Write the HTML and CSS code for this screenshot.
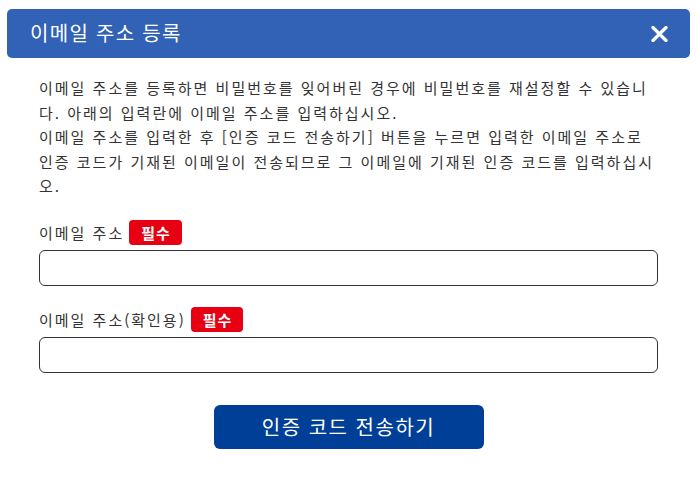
FILE: index.html
```html
<!DOCTYPE html>
<html lang="ko">
<head>
<meta charset="utf-8">
<link rel="stylesheet" href="styles.css">
</head>
<body>
<div class="dialog">
  <div class="header">
    <h1 class="title">이메일 주소 등록</h1>
    <button class="close" aria-label="닫기">
      <svg width="17" height="16" viewBox="0 0 17 16"><path d="M2 1.5L15 14.5M15 1.5L2 14.5" stroke="#fff" stroke-width="3.2" stroke-linecap="round"/></svg>
    </button>
  </div>
  <div class="content">
    <p class="desc">이메일 주소를 등록하면 비밀번호를 잊어버린 경우에 비밀번호를 재설정할 수 있습니다. 아래의 입력란에 이메일 주소를 입력하십시오.<br>이메일 주소를 입력한 후 [인증 코드 전송하기] 버튼을 누르면 입력한 이메일 주소로 인증 코드가 기재된 이메일이 전송되므로 그 이메일에 기재된 인증 코드를 입력하십시오.</p>
    <div class="field">
      <label class="label"><span class="label-text">이메일 주소</span><span class="badge">필수</span></label>
      <input class="input" type="email">
    </div>
    <div class="field">
      <label class="label"><span class="label-text">이메일 주소(확인용)</span><span class="badge">필수</span></label>
      <input class="input" type="email">
    </div>
    <div class="actions">
      <button class="submit">인증 코드 전송하기</button>
    </div>
  </div>
</div>
</body>
</html>
```
FILE: styles.css
```css
html, body {
  margin: 0;
  padding: 0;
  background: #fff;
}
body {
  font-family: "Noto Sans CJK KR", "Noto Sans", sans-serif;
  color: #333;
}
.dialog {
  padding: 9px 7px 0;
}
.header {
  height: 49px;
  background: #3162b6;
  border-radius: 5px;
  display: flex;
  align-items: center;
  justify-content: space-between;
  padding: 0 22px 0 23px;
}
.title {
  margin: 0 0 2px;
  font-size: 20px;
  font-weight: 400;
  letter-spacing: 1.3px;
  color: #fff;
}
.close {
  background: none;
  border: 0;
  padding: 0;
  display: flex;
  cursor: pointer;
}
.content {
  padding: 18px 32px 0;
}
.desc {
  margin: 0;
  font-size: 15px;
  line-height: 24.5px;
  letter-spacing: 2px;
  color: #333;
}
.field {
  margin-top: 21px;
  display: flex;
  flex-direction: column;
}
.label {
  display: flex;
  align-items: center;
  gap: 5px;
  height: 25px;
  margin-bottom: 5px;
}
.label-text {
  font-size: 15px;
  letter-spacing: 2px;
}
.badge {
  background: #e60012;
  color: #fff;
  font-weight: 700;
  font-size: 15px;
  letter-spacing: 1px;
  border-radius: 4px;
  padding: 0 11px 0 12px;
  height: 25px;
  display: inline-flex;
  align-items: center;
}
.input {
  height: 36px;
  box-sizing: border-box;
  border: 1px solid #333;
  border-radius: 6px;
  margin: 0;
  padding: 0 10px;
}
.actions {
  display: flex;
  justify-content: center;
  margin-top: 32px;
}
.submit {
  width: 270px;
  height: 44px;
  background: #003f98;
  color: #fff;
  border: 0;
  border-radius: 6px;
  font-family: inherit;
  font-size: 20px;
  letter-spacing: 1.5px;
  padding: 0;
}
```
